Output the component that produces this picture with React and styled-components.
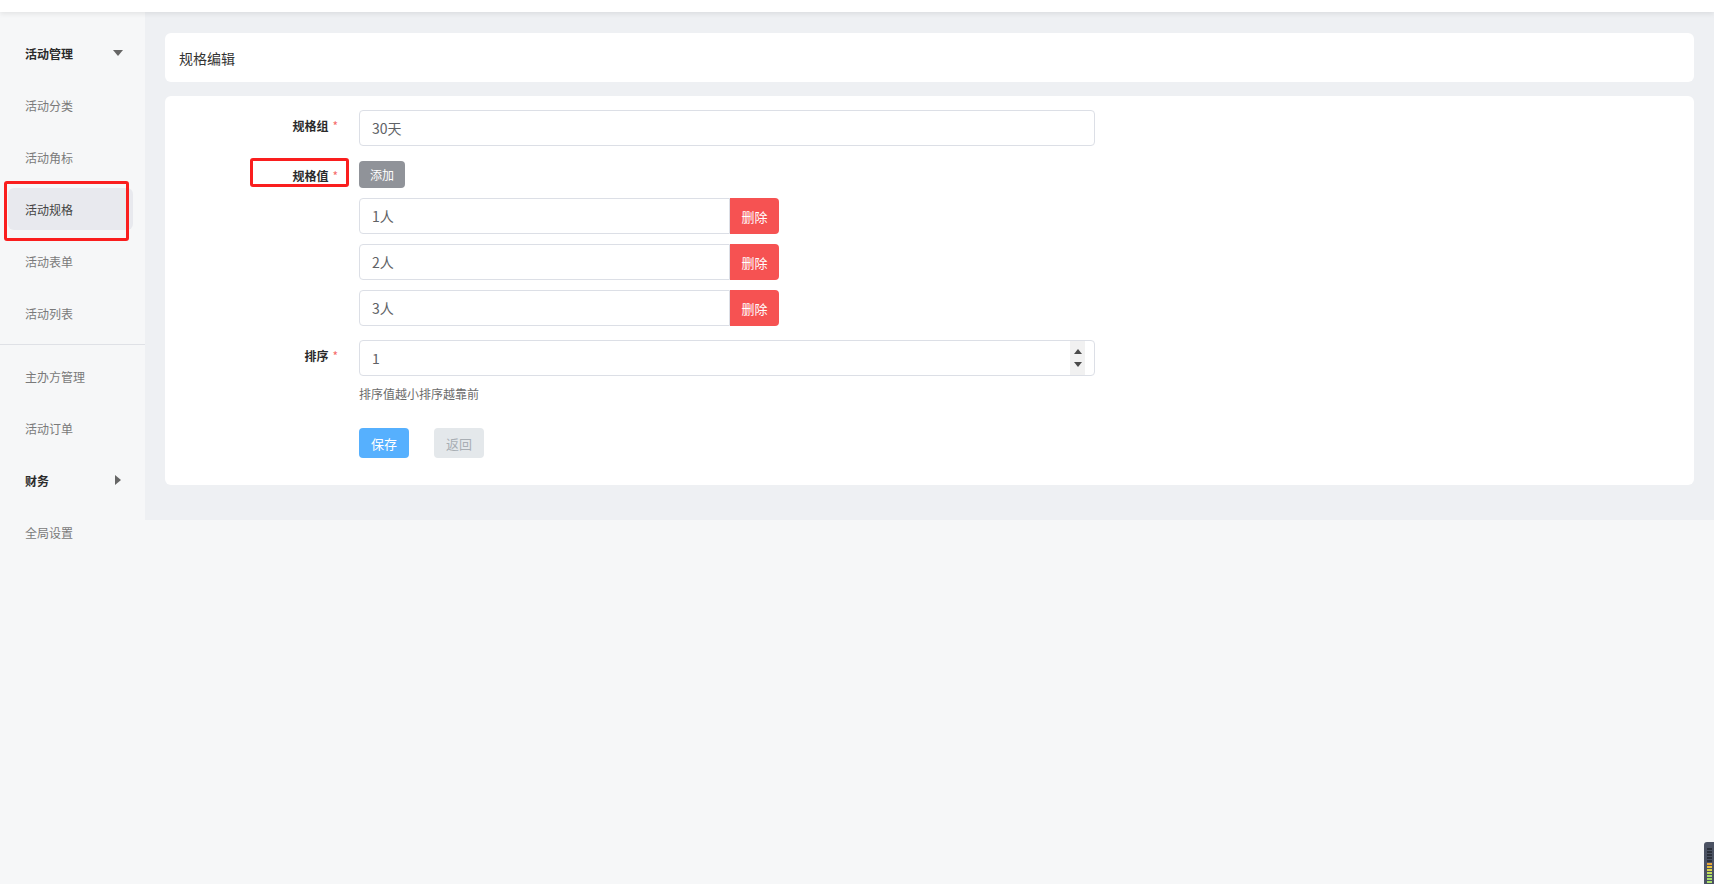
import React from "react";
import styled, { createGlobalStyle } from "styled-components";

const Global = createGlobalStyle`
  html, body { margin: 0; padding: 0; }
  body {
    background: #f6f7f8;
    font-family: "Noto Sans CJK SC", "Noto Sans", sans-serif;
    color: #333;
    min-height: 884px;
  }
  * { box-sizing: border-box; }
`;

const Page = styled.div`
  min-height: 884px;
  position: relative;
`;

const TopBar = styled.div`
  height: 12px;
  background: #fff;
  box-shadow: 0 2px 5px rgba(0, 0, 0, 0.08);
  position: relative;
  z-index: 2;
`;

const Body = styled.div`
  display: flex;
  align-items: flex-start;
`;

const Sidebar = styled.nav`
  width: 145px;
  flex-shrink: 0;
  background: #f6f7f8;
  padding-top: 20px;
  display: flex;
  flex-direction: column;
  gap: 10px;
`;

const NavItem = styled.div`
  position: relative;
  height: 42px;
  margin: 0 12px 0 8px;
  padding: 0 10px 0 17px;
  display: flex;
  align-items: center;
  justify-content: space-between;
  border-radius: 6px;
  font-size: 12px;
  font-weight: ${(p) => (p.$bold ? 700 : 400)};
  color: ${(p) => (p.$bold ? "#2b2b2b" : p.$active ? "#444" : "#7a7a7a")};
  background: ${(p) => (p.$active ? "#e8e9ee" : "transparent")};
`;

const Divider = styled.div`
  height: 1px;
  background: #dfe1e6;
`;

const Caret = styled.span`
  width: 0;
  height: 0;
  ${(p) =>
    p.$dir === "down"
      ? `border-left: 5px solid transparent; border-right: 5px solid transparent; border-top: 6px solid #666;`
      : `border-top: 5px solid transparent; border-bottom: 5px solid transparent; border-left: 6px solid #666; margin-right: 2px;`}
`;

const Annotation = styled.span`
  position: absolute;
  border: 3px solid #fa1e1e;
  border-radius: 3px;
  pointer-events: none;
`;

const Main = styled.main`
  flex: 1;
  background: #eef0f3;
  padding: 21px 20px 35px 20px;
  display: flex;
  flex-direction: column;
  gap: 14px;
`;

const Card = styled.section`
  background: #fff;
  border-radius: 6px;
`;

const HeaderCard = styled(Card)`
  height: 49px;
  display: flex;
  align-items: center;
  padding-left: 14px;
  font-size: 14px;
  color: #333;
`;

const FormCard = styled(Card)`
  padding: 14px 0 27px 0;
  display: flex;
  flex-direction: column;
`;

const Row = styled.div`
  display: flex;
  align-items: flex-start;
  margin-top: ${(p) => p.$mt || 0}px;
`;

const Label = styled.div`
  position: relative;
  width: 194px;
  flex-shrink: 0;
  padding-right: 21px;
  text-align: right;
  font-size: 12px;
  font-weight: 700;
  color: #2b2b2b;
  line-height: ${(p) => p.$lh || 32}px;
`;

const Star = styled.span`
  color: #f56c6c;
  font-weight: 400;
  margin-left: 4px;
`;

const Field = styled.div`
  display: flex;
  flex-direction: column;
`;

const TextInput = styled.input`
  width: ${(p) => p.$w}px;
  height: 36px;
  border: 1px solid #dcdfe6;
  border-radius: ${(p) => (p.$attached ? "4px 0 0 4px" : "4px")};
  padding: 0 12px;
  font-family: inherit;
  font-size: 14px;
  color: #606266;
  background: #fff;
  outline: none;
  appearance: textfield;
  &::-webkit-inner-spin-button,
  &::-webkit-outer-spin-button {
    -webkit-appearance: none;
    margin: 0;
  }
`;

const Group = styled.div`
  display: flex;
  height: 36px;
  & + & {
    margin-top: 10px;
  }
`;

const Btn = styled.button`
  border: none;
  font-family: inherit;
  cursor: pointer;
  display: inline-flex;
  align-items: center;
  justify-content: center;
  padding: 0;
`;

const AddBtn = styled(Btn)`
  width: 46px;
  height: 27px;
  border-radius: 4px;
  background: #909399;
  color: #fff;
  font-size: 12px;
  margin-top: -1px;
`;

const DeleteBtn = styled(Btn)`
  width: 49px;
  height: 36px;
  border-radius: 0 4px 4px 0;
  background: #f65252;
  color: #fff;
  font-size: 13px;
`;

const Values = styled.div`
  margin-top: 10px;
  display: flex;
  flex-direction: column;
`;

const NumberWrap = styled.div`
  position: relative;
  width: 736px;
`;

const Spinner = styled.span`
  position: absolute;
  right: 10px;
  top: 1px;
  bottom: 1px;
  width: 15px;
  background: #f1f1f1;
  display: flex;
  flex-direction: column;
  align-items: center;
  justify-content: space-around;
  padding: 4px 0;
`;

const Tri = styled.span`
  width: 0;
  height: 0;
  border-left: 4px solid transparent;
  border-right: 4px solid transparent;
  ${(p) =>
    p.$up ? "border-bottom: 5px solid #4a4a4a;" : "border-top: 5px solid #4a4a4a;"}
`;

const Hint = styled.div`
  margin-top: 10px;
  font-size: 12px;
  color: #6b6b6b;
  line-height: 16px;
`;

const Actions = styled.div`
  display: flex;
  gap: 25px;
  margin-top: 26px;
`;

const SaveBtn = styled(Btn)`
  width: 50px;
  height: 30px;
  border-radius: 4px;
  background: #56b0fe;
  color: #fff;
  font-size: 13px;
`;

const BackBtn = styled(Btn)`
  width: 50px;
  height: 30px;
  border-radius: 4px;
  background: #e4e8eb;
  color: #a8aeb4;
  font-size: 13px;
`;

const Meter = styled.div`
  position: absolute;
  right: 0;
  bottom: 0;
  width: 10px;
  height: 42px;
  background: #4b5263;
  border-radius: 3px 0 0 0;
  display: flex;
  flex-direction: column;
  align-items: center;
  padding-top: 6px;
  gap: 1px;
`;

const Tick = styled.span`
  width: 5px;
  height: 2px;
  background: ${(p) => p.$c};
`;

const navTop = [
  { t: "活动管理", bold: true, caret: "down" },
  { t: "活动分类" },
  { t: "活动角标" },
  { t: "活动规格", active: true },
  { t: "活动表单" },
  { t: "活动列表" },
];
const navBottom = [
  { t: "主办方管理" },
  { t: "活动订单" },
  { t: "财务", bold: true, caret: "right" },
  { t: "全局设置" },
];

const tickColors = [
  "#2b303b", "#2b303b", "#2b303b", "#2b303b", "#2b303b",
  "#e8a53a", "#e8c23a", "#d9d24a", "#c3dc5a", "#a9e06a", "#a9e06a", "#a9e06a",
];

function NavEntry({ item }) {
  return (
    <NavItem $bold={item.bold} $active={item.active}>
      <span>{item.t}</span>
      {item.caret && <Caret $dir={item.caret} />}
      {item.active && (
        <Annotation style={{ left: -4, top: -7, width: 125, height: 60 }} />
      )}
    </NavItem>
  );
}

export default function App() {
  const values = ["1人", "2人", "3人"];
  return (
    <Page>
      <Global />
      <TopBar />
      <Body>
        <Sidebar>
          {navTop.map((n) => (
            <NavEntry key={n.t} item={n} />
          ))}
          <Divider />
          {navBottom.map((n) => (
            <NavEntry key={n.t} item={n} />
          ))}
        </Sidebar>
        <Main>
          <HeaderCard>规格编辑</HeaderCard>
          <FormCard>
            <Row>
              <Label>
                规格组<Star>*</Star>
              </Label>
              <TextInput $w={736} defaultValue="30天" />
            </Row>
            <Row $mt={15}>
              <Label $lh={30}>
                规格值<Star>*</Star>
                <Annotation style={{ left: 85, top: -3, width: 99, height: 29 }} />
              </Label>
              <Field>
                <div>
                  <AddBtn>添加</AddBtn>
                </div>
                <Values>
                  {values.map((v) => (
                    <Group key={v}>
                      <TextInput $w={371} $attached defaultValue={v} />
                      <DeleteBtn>删除</DeleteBtn>
                    </Group>
                  ))}
                </Values>
              </Field>
            </Row>
            <Row $mt={14}>
              <Label>
                排序<Star>*</Star>
              </Label>
              <Field>
                <NumberWrap>
                  <TextInput $w={736} type="number" defaultValue="1" />
                  <Spinner>
                    <Tri $up />
                    <Tri />
                  </Spinner>
                </NumberWrap>
                <Hint>排序值越小排序越靠前</Hint>
                <Actions>
                  <SaveBtn>保存</SaveBtn>
                  <BackBtn>返回</BackBtn>
                </Actions>
              </Field>
            </Row>
          </FormCard>
        </Main>
      </Body>
      <Meter>
        {tickColors.map((c, i) => (
          <Tick key={i} $c={c} />
        ))}
      </Meter>
    </Page>
  );
}
